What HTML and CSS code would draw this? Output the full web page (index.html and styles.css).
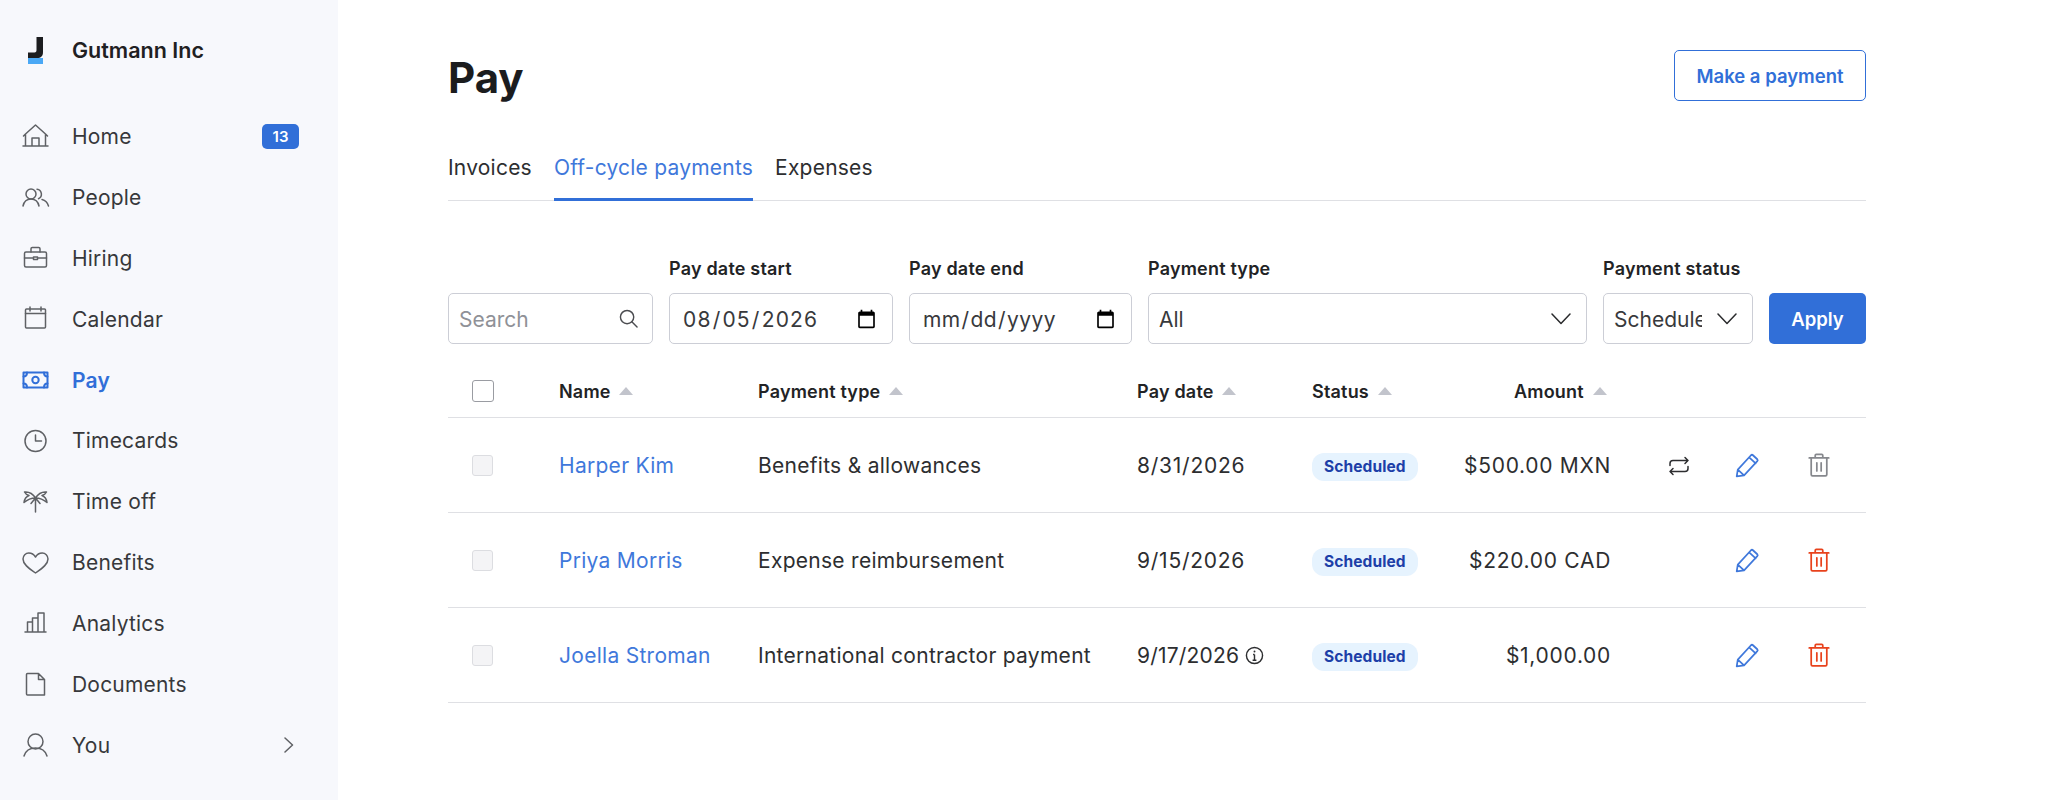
FILE: index.html
```html
<!doctype html>
<html lang="en">
<head>
  <meta charset="utf-8">
  <title>Pay</title>
  <link rel="stylesheet" href="styles.css">
</head>
<body>
  <svg class="defs" width="0" height="0">
    <symbol id="i-pencil" viewBox="0 0 24 24"><path d="M2.500 22.500l1-6.300L15.700 3a1.300 1.300 0 0 1 1.800 0l4 3.700a1.300 1.300 0 0 1 0 1.800L9.300 21.500l-6.800 1zM3.500 16.200l5.800 5.300M14 5l6 5.500"/></symbol>
    <symbol id="i-trash" viewBox="0 0 24 24"><path d="M3 5.500h18M8.500 5.500V3.200c0-.6.400-1 1-1h5c.6 0 1 .4 1 1v2.300M4.800 5.500v15.300c0 .7.500 1.200 1.200 1.200h12c.7 0 1.200-.5 1.200-1.200V5.500M10 10v7.500M14 10v7.500"/></symbol>
  </svg>

  <div class="app">
    <!-- SIDEBAR -->
    <aside class="sidebar">
      <div class="brand">
        <svg class="logo" viewBox="0 0 15 28" width="15" height="28"><path class="logo-j" d="M8.500 1H15v15c0 4-2 6-6 6H0v-5.500h6.500c1.500 0 2-1 2-2.500z"/><rect class="logo-bar" x="0" y="22" width="15" height="6"/></svg>
        <span>Gutmann Inc</span>
      </div>
      <nav class="nav">
        <a class="nav-item"><svg viewBox="0 0 28 28"><path d="M1 24h25M3.500 24V12L13.500 3l10 9v12M3.500 12l-2 2M23.500 12l2 2M10 24v-8h7v8"/></svg><span>Home</span><b class="count">13</b></a>
        <a class="nav-item"><svg viewBox="0 0 28 28"><circle cx="9" cy="11" r="5"/><path d="M1 23c1-4.500 4-7 8-7s7 2.500 8 7M15 6.200a5 5 0 0 1 1.500 9.500M20 16.500c3 .8 5.500 3 6.500 6.500"/></svg><span>People</span></a>
        <a class="nav-item"><svg viewBox="0 0 28 28"><rect x="2.500" y="8" width="22" height="15" rx="1.500"/><path d="M9 8V4.800C9 4 9.600 3.500 10.300 3.500h6.400c.7 0 1.300.5 1.300 1.300V8M2.500 14h9M15.500 14h9M11.500 13h4v2.500h-4z"/></svg><span>Hiring</span></a>
        <a class="nav-item"><svg viewBox="0 0 28 28"><rect x="3.500" y="4" width="20" height="19" rx="1"/><path d="M3.500 8.500h20M8 2v4M19 2v4"/></svg><span>Calendar</span></a>
        <a class="nav-item is-active"><svg viewBox="0 0 28 28"><rect x="1.500" y="6.500" width="24" height="15"/><circle cx="13.500" cy="14" r="3.200"/><path d="M1.500 10.500c2 0 3.500-1.500 3.500-4M25.500 10.500c-2 0-3.500-1.500-3.500-4M1.500 17.500c2 0 3.500 1.500 3.500 4M25.500 17.500c-2 0-3.500 1.500-3.500 4"/></svg><span>Pay</span></a>
        <a class="nav-item"><svg viewBox="0 0 28 28"><circle cx="13.500" cy="14" r="10.500"/><path d="M13.500 8v6h6"/></svg><span>Timecards</span></a>
        <a class="nav-item"><svg viewBox="0 0 28 28"><path d="M13.500 10v14M13.500 10C11 6 7 3.500 2.500 4c1 2 2.500 3 4.500 3.500-2.500 1-4.500 3.500-5 7 3.500-3 7.500-4.500 11.500-4.500zM13.500 10C16 6 20 3.500 24.500 4c-1 2-2.500 3-4.500 3.500 2.500 1 4.500 3.500 5 7-3.500-3-7.500-4.500-11.500-4.500zM13.500 10L9 15.500M13.500 10L18 15.500"/></svg><span>Time off</span></a>
        <a class="nav-item"><svg viewBox="0 0 28 28"><path d="M13.500 24C6 19 1 15 1 10c0-3.500 2.700-6 5.800-6 2.800 0 5.200 1.500 6.700 4 1.500-2.500 3.900-4 6.700-4 3.100 0 5.800 2.500 5.800 6 0 5-5 9-12.500 14z"/></svg><span>Benefits</span></a>
        <a class="nav-item"><svg viewBox="0 0 28 28"><path d="M3 22h21M5.500 22V12h5v10M10.500 22V8H16v14M16 22V3h6v19"/></svg><span>Analytics</span></a>
        <a class="nav-item"><svg viewBox="0 0 28 28"><path d="M5.500 3.500h11l6 6V25h-17a1 1 0 0 1-1-1V4.500a1 1 0 0 1 1-1zM16.500 3.500v6h6"/></svg><span>Documents</span></a>
        <a class="nav-item"><svg viewBox="0 0 28 28"><circle cx="13.500" cy="10.500" r="7.500"/><path d="M2 25c1.500-5 6-8 11.500-8S23.500 20 25 25"/></svg><span>You</span><svg class="chev" viewBox="0 0 10 16"><path d="M1 1l7.500 7L1 15"/></svg></a>
      </nav>
    </aside>

    <!-- MAIN CONTENT -->
    <main class="main">
      <header class="page-head">
        <h1>Pay</h1>
        <button class="btn-outline">Make a payment</button>
      </header>

      <div class="tabs">
        <a class="tab">Invoices</a>
        <a class="tab is-active">Off-cycle payments</a>
        <a class="tab">Expenses</a>
      </div>

      <form class="filters">
        <div class="field f-search">
          <div class="control">
            <input class="input" type="text" placeholder="Search">
            <svg class="over-icon search-icon" viewBox="0 0 20 20"><circle cx="8.500" cy="8.500" r="7"/><path d="M13.500 13.500L19 19"/></svg>
          </div>
        </div>
        <div class="field f-date">
          <label>Pay date start</label>
          <input class="input date-filled" type="date" value="2026-08-05">
        </div>
        <div class="field f-date f-date-end">
          <label>Pay date end</label>
          <input class="input date-empty" type="date">
        </div>
        <div class="field f-type">
          <label>Payment type</label>
          <div class="control">
            <select class="input"><option>All</option></select>
            <svg class="over-icon chevron" viewBox="0 0 20 12"><path d="M1 1l9 9.500L19 1"/></svg>
          </div>
        </div>
        <div class="field f-status">
          <label>Payment status</label>
          <div class="control">
            <select class="input"><option>Scheduled</option></select>
            <svg class="over-icon chevron" viewBox="0 0 20 12"><path d="M1 1l9 9.500L19 1"/></svg>
          </div>
        </div>
        <button type="button" class="btn-primary">Apply</button>
      </form>

      <table class="pay-table">
        <colgroup>
          <col class="c-check"><col class="c-name"><col class="c-type"><col class="c-date"><col class="c-status"><col class="c-amount"><col class="c-act"><col class="c-act2"><col class="c-act3">
        </colgroup>
        <thead>
          <tr>
            <th class="check-cell"><span class="box box-head"></span></th>
            <th>Name <i class="sort"></i></th>
            <th>Payment type <i class="sort"></i></th>
            <th>Pay date <i class="sort"></i></th>
            <th>Status <i class="sort"></i></th>
            <th class="head-amount">Amount <i class="sort"></i></th>
            <th></th><th></th><th></th>
          </tr>
        </thead>
        <tbody>
          <tr>
            <td class="check-cell"><span class="box"></span></td>
            <td><a class="link">Harper Kim</a></td>
            <td>Benefits &amp; allowances</td>
            <td class="num">8/31/2026</td>
            <td><span class="badge">Scheduled</span></td>
            <td class="amount">$500.00 MXN</td>
            <td class="act"><svg class="ico ico-repeat" viewBox="0 0 24 24"><path d="M3 11.500V9.500c0-1.700 1.300-3 3-3h15M18 3.500l3 3-3 3M21 12.500v2c0 1.700-1.300 3-3 3H3M6 14.500l-3 3 3 3"/></svg></td>
            <td class="act"><svg class="ico ico-blue"><use href="#i-pencil"/></svg></td>
            <td class="act act-last"><svg class="ico ico-grey"><use href="#i-trash"/></svg></td>
          </tr>
          <tr>
            <td class="check-cell"><span class="box"></span></td>
            <td><a class="link">Priya Morris</a></td>
            <td>Expense reimbursement</td>
            <td class="num">9/15/2026</td>
            <td><span class="badge">Scheduled</span></td>
            <td class="amount">$220.00 CAD</td>
            <td class="act"></td>
            <td class="act"><svg class="ico ico-blue"><use href="#i-pencil"/></svg></td>
            <td class="act act-last"><svg class="ico ico-red"><use href="#i-trash"/></svg></td>
          </tr>
          <tr>
            <td class="check-cell"><span class="box"></span></td>
            <td><a class="link">Joella Stroman</a></td>
            <td>International contractor payment</td>
            <td class="num"><span class="date-info">9/17/2026 <svg class="info" viewBox="0 0 20 20"><circle cx="10" cy="10" r="8.500"/><path d="M10 9v6M8 15h4M8.500 9H10"/><circle class="dot" cx="10" cy="5.800" r="1"/></svg></span></td>
            <td><span class="badge">Scheduled</span></td>
            <td class="amount">$1,000.00</td>
            <td class="act"></td>
            <td class="act"><svg class="ico ico-blue"><use href="#i-pencil"/></svg></td>
            <td class="act act-last"><svg class="ico ico-red"><use href="#i-trash"/></svg></td>
          </tr>
        </tbody>
      </table>
    </main>
  </div>
</body>
</html>
```

FILE: styles.css
```css
/* Basic reset */
* { box-sizing: border-box; }

html, body {
  margin: 0;
  padding: 0;
  height: 100%;
  background: #fff;
  color: #2a2b2d;
  font-family: "Inter", "Liberation Sans", sans-serif;
}

.defs { position: absolute; }

.app {
  display: flex;
  min-height: 800px;
}

/* Sidebar */
.sidebar {
  flex: 0 0 338px;
  background: #f7f8fc;
  padding: 35px 22px 0;
}

.brand {
  display: flex;
  align-items: center;
  gap: 29px;
  height: 30px;
  padding-left: 6px;
  font-size: 21.500px;
  font-weight: 600;
  color: #1f2022;
}

.logo { flex: none; }
.logo-j { fill: #1c1d1f; }
.logo-bar { fill: #4aa8f5; }

.nav {
  display: flex;
  flex-direction: column;
  margin-top: 41px;
}

.nav-item {
  display: flex;
  align-items: center;
  height: 60.900px;
  font-size: 21px;
  letter-spacing: .2px;
  color: #37383b;
}

.nav-item svg {
  flex: none;
  width: 28px;
  height: 28px;
  margin-right: 22px;
  fill: none;
  stroke: #5f6165;
  stroke-width: 1.500;
  stroke-linecap: round;
  stroke-linejoin: round;
}

.nav-item span { flex: 1; }

.nav-item.is-active {
  color: #316fd8;
  font-weight: 600;
}
.nav-item.is-active svg { stroke: #316fd8; stroke-width: 2; }

.count {
  width: 37px;
  height: 25px;
  margin-right: 17px;
  border-radius: 5px;
  background: #316fd8;
  color: #fff;
  font-size: 15px;
  font-weight: 600;
  letter-spacing: 0;
  line-height: 25px;
  text-align: center;
}

.nav-item svg.chev {
  width: 10px;
  height: 16px;
  margin: 0 22px 0 0;
}

/* Main */
.main {
  flex: 0 0 1418px;
  margin-left: 110px;
  padding-top: 50px;
}

.page-head {
  display: flex;
  justify-content: space-between;
  align-items: flex-start;
  height: 100px;
}

h1 {
  margin: 0;
  font-size: 42px;
  line-height: 56px;
  font-weight: 700;
  color: #1b1c1e;
}

.btn-outline {
  width: 192px;
  height: 51px;
  border: 1.500px solid #316fd8;
  border-radius: 5px;
  background: #fff;
  color: #316fd8;
  font: 600 18.500px "Inter", sans-serif;
}

/* Tabs */
.tabs {
  display: flex;
  gap: 22px;
  height: 51px;
  border-bottom: 1px solid #dfe0e4;
}

.tab {
  height: 51px;
  padding-top: 3px;
  font-size: 21px;
  letter-spacing: .22px;
  line-height: 30px;
  color: #2d2e30;
}

.tab.is-active {
  color: #3f78db;
  border-bottom: 3px solid #316fd8;
}

/* Filters */
.filters {
  display: flex;
  align-items: flex-end;
  gap: 16px;
  margin-top: 56px;
}

.field label {
  display: block;
  margin-bottom: 12px;
  font-size: 18px;
  letter-spacing: .2px;
  line-height: 24px;
  font-weight: 600;
  color: #222325;
}

.f-search { width: 205px; }
.f-date { width: 224px; }
.f-date-end { width: 223px; }
.f-type { width: 439px; }
.f-status { width: 150px; }

.control { position: relative; }

.input {
  display: block;
  width: 100%;
  height: 51px;
  padding: 2px 10px 0;
  border: 1px solid #ccced6;
  border-radius: 5px;
  background: #fff;
  color: #38393c;
  font: 400 21px "Inter", sans-serif;
  outline: none;
}

.input::placeholder { color: #8f9197; }

.input[type="date"] { padding: 2px 13px 0 12px; }
.date-filled { letter-spacing: 1.200px; }
.date-empty { letter-spacing: .400px; }

select.input {
  appearance: none;
  padding-right: 50px;
}

.over-icon {
  position: absolute;
  fill: none;
  stroke-linecap: round;
  stroke-linejoin: round;
  pointer-events: none;
}

.search-icon {
  top: 16px;
  right: 15px;
  width: 19px;
  height: 19px;
  stroke: #4b4c50;
  stroke-width: 1.500;
}

.chevron {
  top: 20px;
  right: 16px;
  width: 20px;
  height: 12px;
  stroke: #2a2b2d;
  stroke-width: 1.500;
}

.btn-primary {
  width: 97px;
  height: 51px;
  border: 0;
  border-radius: 5px;
  background: #316fd8;
  color: #fff;
  font: 600 18.500px "Inter", sans-serif;
}

/* Table */
.pay-table {
  width: 1418px;
  margin-top: 21px;
  border-collapse: collapse;
  table-layout: fixed;
}

.c-check { width: 111px; }
.c-name { width: 199px; }
.c-type { width: 379px; }
.c-date { width: 175px; }
.c-status { width: 147px; }
.c-amount { width: 152px; }
.c-act { width: 80px; }
.c-act2 { width: 69px; }
.c-act3 { width: 106px; }

th {
  height: 52px;
  padding: 2px 0 0;
  border-bottom: 1px solid #dfe0e4;
  text-align: left;
  font-size: 18px;
  letter-spacing: .2px;
  font-weight: 600;
  color: #222325;
  vertical-align: middle;
}

td {
  height: 95px;
  padding: 2px 0 0;
  border-bottom: 1px solid #dfe0e4;
  font-size: 21px;
  letter-spacing: .28px;
  color: #2d2e30;
  vertical-align: middle;
}

th.check-cell { padding: 0 0 0 24px; }
.check-cell { padding-left: 24px; }

.box {
  display: block;
  width: 21px;
  height: 21px;
  border: 1px solid #dcdde1;
  border-radius: 3px;
  background: #f4f4f6;
}

.box-head {
  width: 22px;
  height: 22px;
  border: 1.500px solid #9a9ca2;
  background: #fff;
}

.sort {
  display: inline-block;
  width: 0;
  height: 0;
  margin-left: 4px;
  vertical-align: 3px;
  border-left: 7px solid transparent;
  border-right: 7px solid transparent;
  border-bottom: 8px solid #c2c4cc;
}

.link { color: #3f78db; }

.num { letter-spacing: .75px; }

.date-info {
  display: inline-flex;
  align-items: center;
  gap: 6px;
  letter-spacing: .2px;
}

.info {
  width: 19px;
  height: 19px;
  fill: none;
  stroke: #2d2e30;
  stroke-width: 1.500;
}
.info .dot { fill: #2d2e30; stroke: none; }

.badge {
  display: inline-block;
  height: 28px;
  padding: 0 12px;
  border-radius: 12px;
  background: #e6f3fe;
  color: #1d3fa8;
  font-size: 15.500px;
  font-weight: 700;
  letter-spacing: .1px;
  line-height: 28px;
  vertical-align: -2px;
}

.head-amount { padding-left: 55px; }

.amount {
  text-align: right;
  letter-spacing: .7px;
}

.act {
  padding-top: 0;
  text-align: right;
}
.act-last { padding-right: 34px; }

.ico {
  display: inline-block;
  width: 26px;
  height: 26px;
  fill: none;
  stroke-width: 1.600;
  stroke-linecap: round;
  stroke-linejoin: round;
  vertical-align: middle;
}

.ico-repeat { width: 24px; height: 24px; stroke: #2d2e30; stroke-width: 1.500; }
.ico-blue { stroke: #3f78db; }
.ico-grey { stroke: #86888d; }
.ico-red { stroke: #e8421c; }
```
